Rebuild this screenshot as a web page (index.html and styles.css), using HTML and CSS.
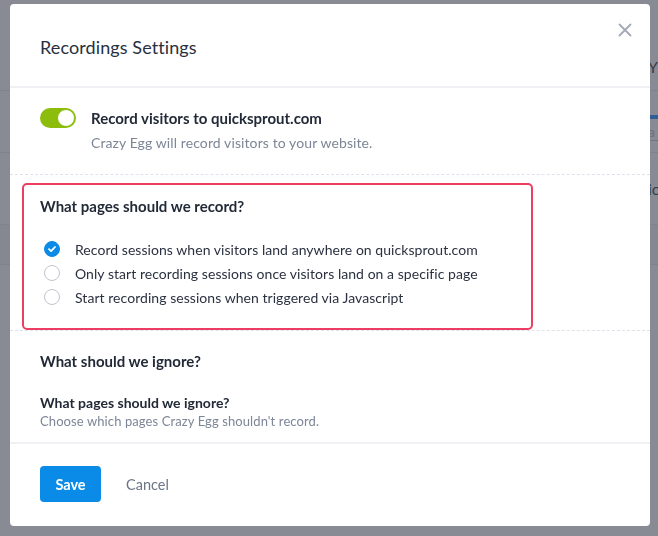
FILE: index.html
```
<!DOCTYPE html>
<html>
<head>
<meta charset="utf-8">
<link rel="stylesheet" href="styles.css">
</head>
<body>
<div class="page">
  <div class="prow r1"><span class="pr-text">Y</span></div>
  <div class="prow r2"><span class="pr-bar"></span><span class="pr-text small">a</span></div>
  <div class="prow r3"><span class="pr-text">ic</span></div>
  <div class="prow r4"></div>
</div>

<div class="modal">
  <div class="m-header">
    <h1 class="m-title">Recordings Settings</h1>
    <button class="m-close" aria-label="Close">
      <svg width="14" height="14" viewBox="0 0 14 14"><path d="M1.5 1.5 L12.5 12.5 M12.5 1.5 L1.5 12.5" stroke="#a3a9b7" stroke-width="1.8" fill="none" stroke-linecap="round"/></svg>
    </button>
  </div>

  <div class="sec sec-toggle">
    <div class="toggle"><span class="knob"></span></div>
    <div class="toggle-text">
      <div class="bold">Record visitors to quicksprout.com</div>
      <div class="sub">Crazy Egg will record visitors to your website.</div>
    </div>
  </div>

  <div class="sec sec-pages">
    <div class="highlight">
      <div class="bold">What pages should we record?</div>
      <ul class="radios">
        <li><span class="radio checked"><svg width="10" height="10" viewBox="0 0 10 10"><path d="M2 5.2 L4.1 7.2 L8 3" stroke="#fff" stroke-width="1.8" fill="none" stroke-linecap="round" stroke-linejoin="round"/></svg></span>Record sessions when visitors land anywhere on quicksprout.com</li>
        <li><span class="radio"></span>Only start recording sessions once visitors land on a specific page</li>
        <li><span class="radio"></span>Start recording sessions when triggered via Javascript</li>
      </ul>
    </div>
  </div>

  <div class="sec sec-ignore">
    <div class="bold">What should we ignore?</div>
    <div class="bold ign-sub">What pages should we ignore?</div>
    <div class="sub ign-desc">Choose which pages Crazy Egg shouldn't record.</div>
  </div>

  <div class="m-footer">
    <button class="btn-save">Save</button>
    <button class="btn-cancel">Cancel</button>
  </div>
</div>
</body>
</html>
```
FILE: styles.css
```
* { box-sizing: border-box; }
html, body { margin: 0; padding: 0; }
body {
  width: 658px;
  height: 536px;
  overflow: hidden;
  background: #888a94;
  font-family: "Lato", "Liberation Sans", sans-serif;
  color: #242b38;
}
.page { display: flex; flex-direction: column; padding-top: 42px; }
.prow {
  display: flex;
  justify-content: flex-end;
  align-items: center;
  border-bottom: 1px solid #80838d;
  color: #3a3d45;
  font-size: 16px;
}
.r1 { height: 49px; }
.r2 { height: 62px; flex-direction: column; align-items: flex-end; justify-content: flex-start; }
.r3 { height: 72px; }
.r4 { height: 40px; background: #858791; }
.pr-text { width: 10px; overflow: hidden; }
.pr-bar { display: block; width: 8px; height: 4px; background: #2f5f94; margin-top: 24px; }
.pr-text.small { color: #6d7079; font-size: 14px; border-bottom: 1px dashed #6d7079; margin-top: 4px; }

.modal {
  position: fixed;
  left: 10px;
  top: 4px;
  width: 640px;
  height: 522px;
  background: #fff;
  border-radius: 4px;
  display: flex;
  flex-direction: column;
}
.m-header {
  display: flex;
  justify-content: space-between;
  align-items: flex-start;
  padding: 32px 18px 0 30px;
  height: 84px;
  border-bottom: 2px solid #f0f0f5;
}
.m-title {
  margin: 0;
  font-size: 18px;
  font-weight: 400;
  letter-spacing: 0.1px;
  line-height: 22px;
  color: #283040;
}
.m-close {
  border: 0;
  background: none;
  padding: 0;
  margin-top: -13px;
  width: 14px;
  height: 14px;
  cursor: pointer;
}
.bold { font-weight: 700; font-size: 15px; line-height: 20px; color: #222a37; }
.sub { font-size: 14px; letter-spacing: 0.1px; line-height: 18px; color: #7d8696; }

.sec { border-bottom: 1px dashed #dfe2ea; }
.sec-toggle {
  display: flex;
  align-items: flex-start;
  gap: 15px;
  padding: 20px 30px 0 30px;
  height: 87px;
}
.toggle {
  width: 36px;
  height: 20px;
  border-radius: 10px;
  background: #8cbc0c;
  position: relative;
  flex: none;
}
.knob {
  position: absolute;
  right: 1px;
  top: 1px;
  width: 18px;
  height: 18px;
  border-radius: 50%;
  background: #fff;
  border: 1px solid #8cbc0c;
}
.toggle-text .sub { margin-top: 6px; }

.sec-pages { padding: 8px 117px 0 12px; height: 156px; }
.highlight {
  border: 2px solid #ee3d62;
  border-radius: 5px;
  padding: 11px 16px 0 16px;
  height: 147px;
}
.radios { list-style: none; margin: 21px 0 0 0; padding: 0; }
.radios li {
  display: flex;
  align-items: center;
  height: 24px;
  font-size: 14px;
  letter-spacing: 0.05px;
  color: #2a3140;
}
.radio {
  width: 16px;
  height: 16px;
  border-radius: 50%;
  border: 1.5px solid #bfc3cd;
  margin: 0 15px 0 4px;
  flex: none;
  display: flex;
  align-items: center;
  justify-content: center;
  background: #fff;
}
.radio.checked { background: #0b8ae6; border-color: #0b8ae6; }

.sec-ignore {
  padding: 20px 30px 0 30px;
  height: 113px;
  border-bottom: 2px solid #f0f0f5;
}
.ign-sub { margin-top: 22px; font-size: 14px; }
.ign-desc { margin-top: -1px; font-size: 13px; }

.m-footer {
  display: flex;
  align-items: center;
  gap: 25px;
  padding: 22px 30px 0 30px;
}
.btn-save {
  width: 61px;
  height: 36px;
  border: 0;
  border-radius: 4px;
  background: #0b8be8;
  color: #fff;
  font-family: inherit;
  font-weight: 700;
  font-size: 14.5px;
}
.btn-cancel {
  border: 0;
  background: none;
  padding: 0;
  color: #6c7586;
  font-family: inherit;
  font-size: 14.5px;
}
```
